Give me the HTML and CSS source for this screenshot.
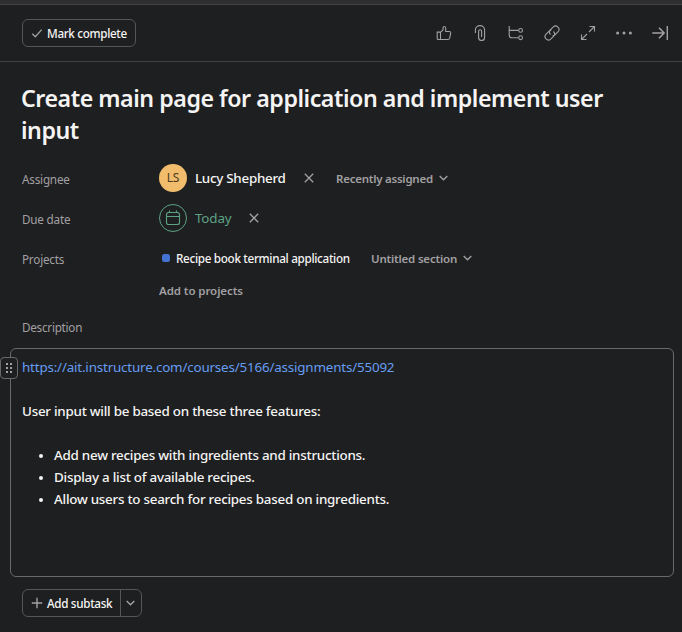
FILE: index.html
```
<!DOCTYPE html>
<html lang="en">
<head>
<meta charset="utf-8">
<title>Task details</title>
<link rel="stylesheet" href="styles.css">
</head>
<body>
<div class="strip"></div>
<header class="toolbar">
  <button class="button complete">
    <svg width="12" height="12" viewBox="0 0 12 12"><path d="M1.3 6.8 4.3 9.7 10.7 2.6"/></svg>
    <span>Mark complete</span>
  </button>
  <nav class="actions">
    <svg viewBox="0 0 16 16"><path d="M1.2 7.1h3.3v7.4H2.2a1 1 0 0 1-1-1zM4.5 7.1 7 4.9V2.9c0-2 2.7-1.8 2.7.4v3.2h3.6c1 0 1.6.8 1.4 1.7l-1 4.8c-.2.9-.8 1.5-1.7 1.5H4.5"/></svg>
    <svg viewBox="0 0 16 16"><path d="M3.4 8V5a4.6 4.4 0 0 1 9.2 0v7.5a3 3 0 0 1-6 0V6.2a1.5 1.5 0 0 1 3 0v5.9"/></svg>
    <svg viewBox="0 0 16 16"><path d="M1.2 1v8.9c0 1.9.9 2.8 2.8 2.8h6.6M1.2 5.4h9.4"/><circle cx="12.6" cy="5.4" r="1.9"/><circle cx="12.6" cy="12.7" r="1.9"/></svg>
    <svg viewBox="0 0 16 16"><path d="M6.5 9.5a3.4 3.4 0 0 1 0-4.8l2.8-2.8a3.4 3.4 0 0 1 4.8 4.8l-2.9 2.9a3.4 3.4 0 0 1-2.5 1M9.5 6.5a3.4 3.4 0 0 1 0 4.8l-2.8 2.8a3.4 3.4 0 0 1-4.8-4.8l2.9-2.9a3.4 3.4 0 0 1 2.5-1"/></svg>
    <svg viewBox="0 0 16 16"><path d="M9.5 1.5h5v5M14.5 1.5 9 7M1.5 9.5v5h5M1.5 14.5 7 9"/></svg>
    <svg class="dots" viewBox="0 0 16 16"><circle cx="1.6" cy="8" r="1.5"/><circle cx="8" cy="8" r="1.5"/><circle cx="14.4" cy="8" r="1.5"/></svg>
    <svg class="heavy" viewBox="0 0 16 16"><path d="M.3 8h11.5M7 2.8 12.1 8 7 13.2M15.4 1v14"/></svg>
  </nav>
</header>
<main class="task">
  <h1 class="title"><span>Create main page for application and implement user</span> input</h1>
  <section class="fields">
    <div class="field">
      <span class="label">Assignee</span>
      <span class="avatar">LS</span>
      <span class="name">Lucy Shepherd</span>
      <svg class="remove" viewBox="0 0 10 10"><path d="m.8.8 8.4 8.4M9.2.8.8 9.2"/></svg>
      <span class="picker recent">Recently assigned</span>
      <svg class="chevron" viewBox="0 0 9 6"><path d="m.7.9 3.8 3.8L8.3.9"/></svg>
    </div>
    <div class="field">
      <span class="label">Due date</span>
      <span class="date-icon"><svg viewBox="0 0 16 16"><rect x="1.5" y="2.5" width="13" height="12" rx="2.3"/><path d="M1.5 6.5h13M4.5.6v1.9M11.5.6v1.9"/></svg></span>
      <span class="today">Today</span>
      <svg class="remove" viewBox="0 0 10 10"><path d="m.8.8 8.4 8.4M9.2.8.8 9.2"/></svg>
    </div>
    <div class="field">
      <span class="label">Projects</span>
      <span class="project-dot"></span>
      <span class="project">Recipe book terminal application</span>
      <span class="picker section">Untitled section</span>
      <svg class="chevron" viewBox="0 0 9 6"><path d="m.7.9 3.8 3.8L8.3.9"/></svg>
    </div>
    <div class="add-project">Add to projects</div>
  </section>
  <h2 class="description-label">Description</h2>
  <section class="description">
    <span class="handle"><svg viewBox="0 0 8 12"><path d="M1 1h2v2H1zM5 1h2v2H5zM1 5h2v2H1zM5 5h2v2H5zM1 9h2v2H1zM5 9h2v2H5z"/></svg></span>
    <p class="link">https://ait.instructure.com/courses/5166/assignments/55092</p>
    <p class="intro">User input will be based on these three features:</p>
    <ul>
      <li>Add new recipes with ingredients and instructions.</li>
      <li>Display a list of available recipes.</li>
      <li>Allow users to search for recipes based on ingredients.</li>
    </ul>
  </section>
  <div class="button subtask">
    <span class="add"><svg width="12" height="12" viewBox="0 0 12 12"><path d="M6 .8v10.4M.8 6h10.4"/></svg><span>Add subtask</span></span>
    <span class="more"><svg class="chevron" viewBox="0 0 9 6"><path d="m.7.9 3.8 3.8L8.3.9"/></svg></span>
  </div>
</main>
</body>
</html>
```
FILE: styles.css
```
* { box-sizing: border-box; }
body {
  margin: 0;
  height: 632px;
  overflow: hidden;
  background: #1e1f21;
  color: #f5f4f3;
  font: 500 13.4px/22px "Noto Sans", "Open Sans", sans-serif;
  letter-spacing: -0.25px;
}
svg { display: block; flex: none; fill: none; stroke: #a2a0a2; stroke-width: 1.1; }
.strip { height: 5px; background: #2e2e30; border-bottom: 1px solid #424244; }
.toolbar {
  display: flex;
  align-items: center;
  justify-content: space-between;
  height: 57px;
  padding: 0 14px 0 22px;
  border-bottom: 1px solid #424244;
}
.button {
  display: flex;
  align-items: center;
  height: 28px;
  border: 1px solid #565557;
  border-radius: 6px;
  background: transparent;
  color: #f5f4f3;
  font: 500 11.7px/16px "Noto Sans", "Open Sans", sans-serif;
  letter-spacing: -0.33px;
  white-space: nowrap;
}
.complete { width: 114px; padding: 0 0 0 8px; gap: 4px; }
.complete svg { stroke-width: 1.3; }
.actions { display: flex; gap: 20px; }
.actions svg { width: 16px; height: 16px; }
.actions .dots { fill: #a2a0a2; stroke: none; }
.actions .heavy { stroke-width: 1.6; }
.title {
  margin: 0;
  padding: 20px 60px 0 21px;
  font-size: 23.2px;
  line-height: 32px;
  font-weight: 600;
  letter-spacing: -0.46px;
}
.title span { white-space: nowrap; }
.fields { padding: 12px 0 0 22px; }
.field { display: flex; align-items: center; height: 40px; white-space: nowrap; }
.label { width: 137px; padding-top: 1px; color: #a2a0a2; font-size: 11.7px; font-weight: 400; letter-spacing: -0.2px; }
.avatar {
  width: 28px;
  height: 28px;
  border-radius: 50%;
  background: #f1bd6c;
  color: #4b3a20;
  font-size: 12px;
  line-height: 28px;
  font-weight: 400;
  text-align: center;
}
.name, .today { margin-left: 8px; }
.name { width: 91px; letter-spacing: -0.28px; }
.today { width: 37px; color: #5da283; font-weight: 400; letter-spacing: -0.15px; }
.remove { width: 10px; height: 10px; margin-left: 18px; stroke-width: 1.3; }
.today + .remove { margin-left: 17px; }
.picker, .add-project { color: #a2a0a2; font-size: 11.5px; font-weight: 600; letter-spacing: -0.24px; }
.picker { padding-top: 1px; }
.recent { width: 97px; margin-left: 22px; }
.section { width: 86px; margin-left: 21px; letter-spacing: -0.2px; }
.chevron { width: 9px; height: 6px; margin-left: 6px; stroke-width: 1.4; }
.date-icon {
  display: grid;
  place-items: center;
  width: 28px;
  height: 28px;
  border: 1px solid #5da283;
  border-radius: 50%;
}
.date-icon svg { width: 16px; height: 16px; stroke: #5da283; }
.project-dot { width: 8px; height: 8px; margin-left: 3px; border-radius: 2.5px; background: #4573d2; }
.project { width: 174px; margin-left: 6px; font-size: 11.7px; letter-spacing: -0.31px; }
.add-project { height: 24px; padding-left: 137px; line-height: 26px; letter-spacing: -0.08px; }
.description-label { margin: 14px 0 0 22px; height: 30px; color: #a2a0a2; font-size: 11.7px; line-height: 22px; font-weight: 400; letter-spacing: -0.25px; }
.description {
  position: relative;
  height: 229px;
  margin: 2px 8px 0 10px;
  padding: 7px 11px;
  border: 1px solid #6a696a;
  border-radius: 6px;
}
.description p { margin: 0 0 22px; }
.description .link { color: #669df1; font-weight: 400; letter-spacing: -0.18px; }
.description ul { margin: 0; padding: 0 0 0 32px; list-style: none; }
.description li { display: flex; align-items: center; }
.description li::before { content: ""; width: 4px; height: 4px; margin: 2px 11px 0 -15px; border-radius: 50%; background: #f5f4f3; }
.handle {
  position: absolute;
  left: -11px;
  top: 8px;
  display: grid;
  place-items: center;
  width: 18px;
  height: 22px;
  border: 1px solid #6a696a;
  border-radius: 4px;
  background: #1e1f21;
}
.handle svg { width: 8px; height: 12px; fill: #a2a0a2; stroke: none; }
.subtask { width: 120px; margin: 12px 0 0 22px; }
.add { display: flex; align-items: center; gap: 4px; width: 98px; height: 26px; padding-left: 8px; border-right: 1px solid #565557; }
.add svg { stroke-width: 1.4; }
.more .chevron { margin-left: 5px; }
```
